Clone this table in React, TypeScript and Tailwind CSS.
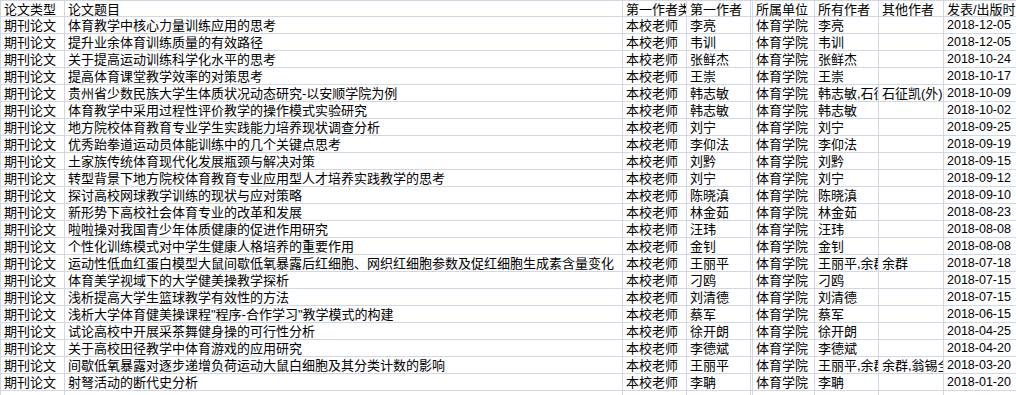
import React from "react";

type Row = {
  title: string;
  first: string;
  all?: string;
  other?: string;
  date: string;
};

const rows: Row[] = [
  { title: "体育教学中核心力量训练应用的思考", first: "李亮", date: "2018-12-05" },
  { title: "提升业余体育训练质量的有效路径", first: "韦训", date: "2018-12-05" },
  { title: "关于提高运动训练科学化水平的思考", first: "张鲜杰", date: "2018-10-24" },
  { title: "提高体育课堂教学效率的对策思考", first: "王崇", date: "2018-10-17" },
  {
    title: "贵州省少数民族大学生体质状况动态研究-以安顺学院为例",
    first: "韩志敏",
    all: "韩志敏,石征凯(外)",
    other: "石征凯(外)",
    date: "2018-10-09",
  },
  { title: "体育教学中采用过程性评价教学的操作模式实验研究", first: "韩志敏", date: "2018-10-02" },
  { title: "地方院校体育教育专业学生实践能力培养现状调查分析", first: "刘宁", date: "2018-09-25" },
  { title: "优秀跆拳道运动员体能训练中的几个关键点思考", first: "李仰法", date: "2018-09-19" },
  { title: "土家族传统体育现代化发展瓶颈与解决对策", first: "刘黔", date: "2018-09-15" },
  { title: "转型背景下地方院校体育教育专业应用型人才培养实践教学的思考", first: "刘宁", date: "2018-09-12" },
  { title: "探讨高校网球教学训练的现状与应对策略", first: "陈晓滇", date: "2018-09-10" },
  { title: "新形势下高校社会体育专业的改革和发展", first: "林金茹", date: "2018-08-23" },
  { title: "啦啦操对我国青少年体质健康的促进作用研究", first: "汪玮", date: "2018-08-08" },
  { title: "个性化训练模式对中学生健康人格培养的重要作用", first: "金钊", date: "2018-08-08" },
  {
    title: "运动性低血红蛋白模型大鼠间歇低氧暴露后红细胞、网织红细胞参数及促红细胞生成素含量变化",
    first: "王丽平",
    all: "王丽平,余群",
    other: "余群",
    date: "2018-07-18",
  },
  { title: "体育美学视域下的大学健美操教学探析", first: "刁鸥", date: "2018-07-15" },
  { title: "浅析提高大学生篮球教学有效性的方法", first: "刘清德", date: "2018-07-15" },
  { title: "浅析大学体育健美操课程\"程序-合作学习\"教学模式的构建", first: "蔡军", date: "2018-06-15" },
  { title: "试论高校中开展采茶舞健身操的可行性分析", first: "徐开朗", date: "2018-04-25" },
  { title: "关于高校田径教学中体育游戏的应用研究", first: "李德斌", date: "2018-04-20" },
  {
    title: "间歇低氧暴露对逐步递增负荷运动大鼠白细胞及其分类计数的影响",
    first: "王丽平",
    all: "王丽平,余群,翁锡全",
    other: "余群,翁锡全",
    date: "2018-03-20",
  },
  { title: "射弩活动的断代史分析", first: "李聃", date: "2018-01-20" },
];

// 单元格：横向裁切，纵向不裁（像 Excel 一样）
const cell = "shrink-0 overflow-x-clip whitespace-nowrap border-r border-[#d0d7e5] pl-[3px] pt-[1px] leading-[15px]";
const font = "[font-family:'Liberation_Sans','Noto_Sans_CJK_SC',sans-serif]";

function SheetRow({ cols, date, header }: { cols: string[]; date: string; header?: boolean }) {
  return (
    <div
      className={`flex h-[17px] border-b border-l border-[#d0d7e5] text-[13px] text-black ${font} ${
        header ? "border-t" : ""
      }`}
    >
      <div className={`${cell} w-[64px]`}>{cols[0]}</div>
      <div className={`${cell} w-[558px]`}>{cols[1]}</div>
      <div className={`${cell} w-[64px]`}>{cols[2]}</div>
      <div className={`${cell} w-[64px]`}>{cols[3]}</div>
      <div className="w-[2px] shrink-0 border-r border-[#d0d7e5]" />
      <div className={`${cell} w-[62px]`}>{cols[4]}</div>
      <div className={`${cell} w-[64px]`}>{cols[5]}</div>
      <div className={`${cell} w-[65px]`}>{cols[6]}</div>
      <div className={`${cell} w-[80px] ${header ? "" : "pl-[2px] text-[12.5px]"}`}>{date}</div>
    </div>
  );
}

export default function App() {
  return (
    <div className="h-[395px] w-[1016px] overflow-hidden bg-white">
      <SheetRow
        header
        cols={["论文类型", "论文题目", "第一作者类型", "第一作者", "所属单位", "所有作者", "其他作者"]}
        date="发表/出版时间"
      />
      {rows.map((r, i) => (
        <SheetRow
          key={i}
          cols={["期刊论文", r.title, "本校老师", r.first, "体育学院", r.all ?? r.first, r.other ?? ""]}
          date={r.date}
        />
      ))}
      <SheetRow cols={["", "", "", "", "", "", ""]} date="" />
    </div>
  );
}
